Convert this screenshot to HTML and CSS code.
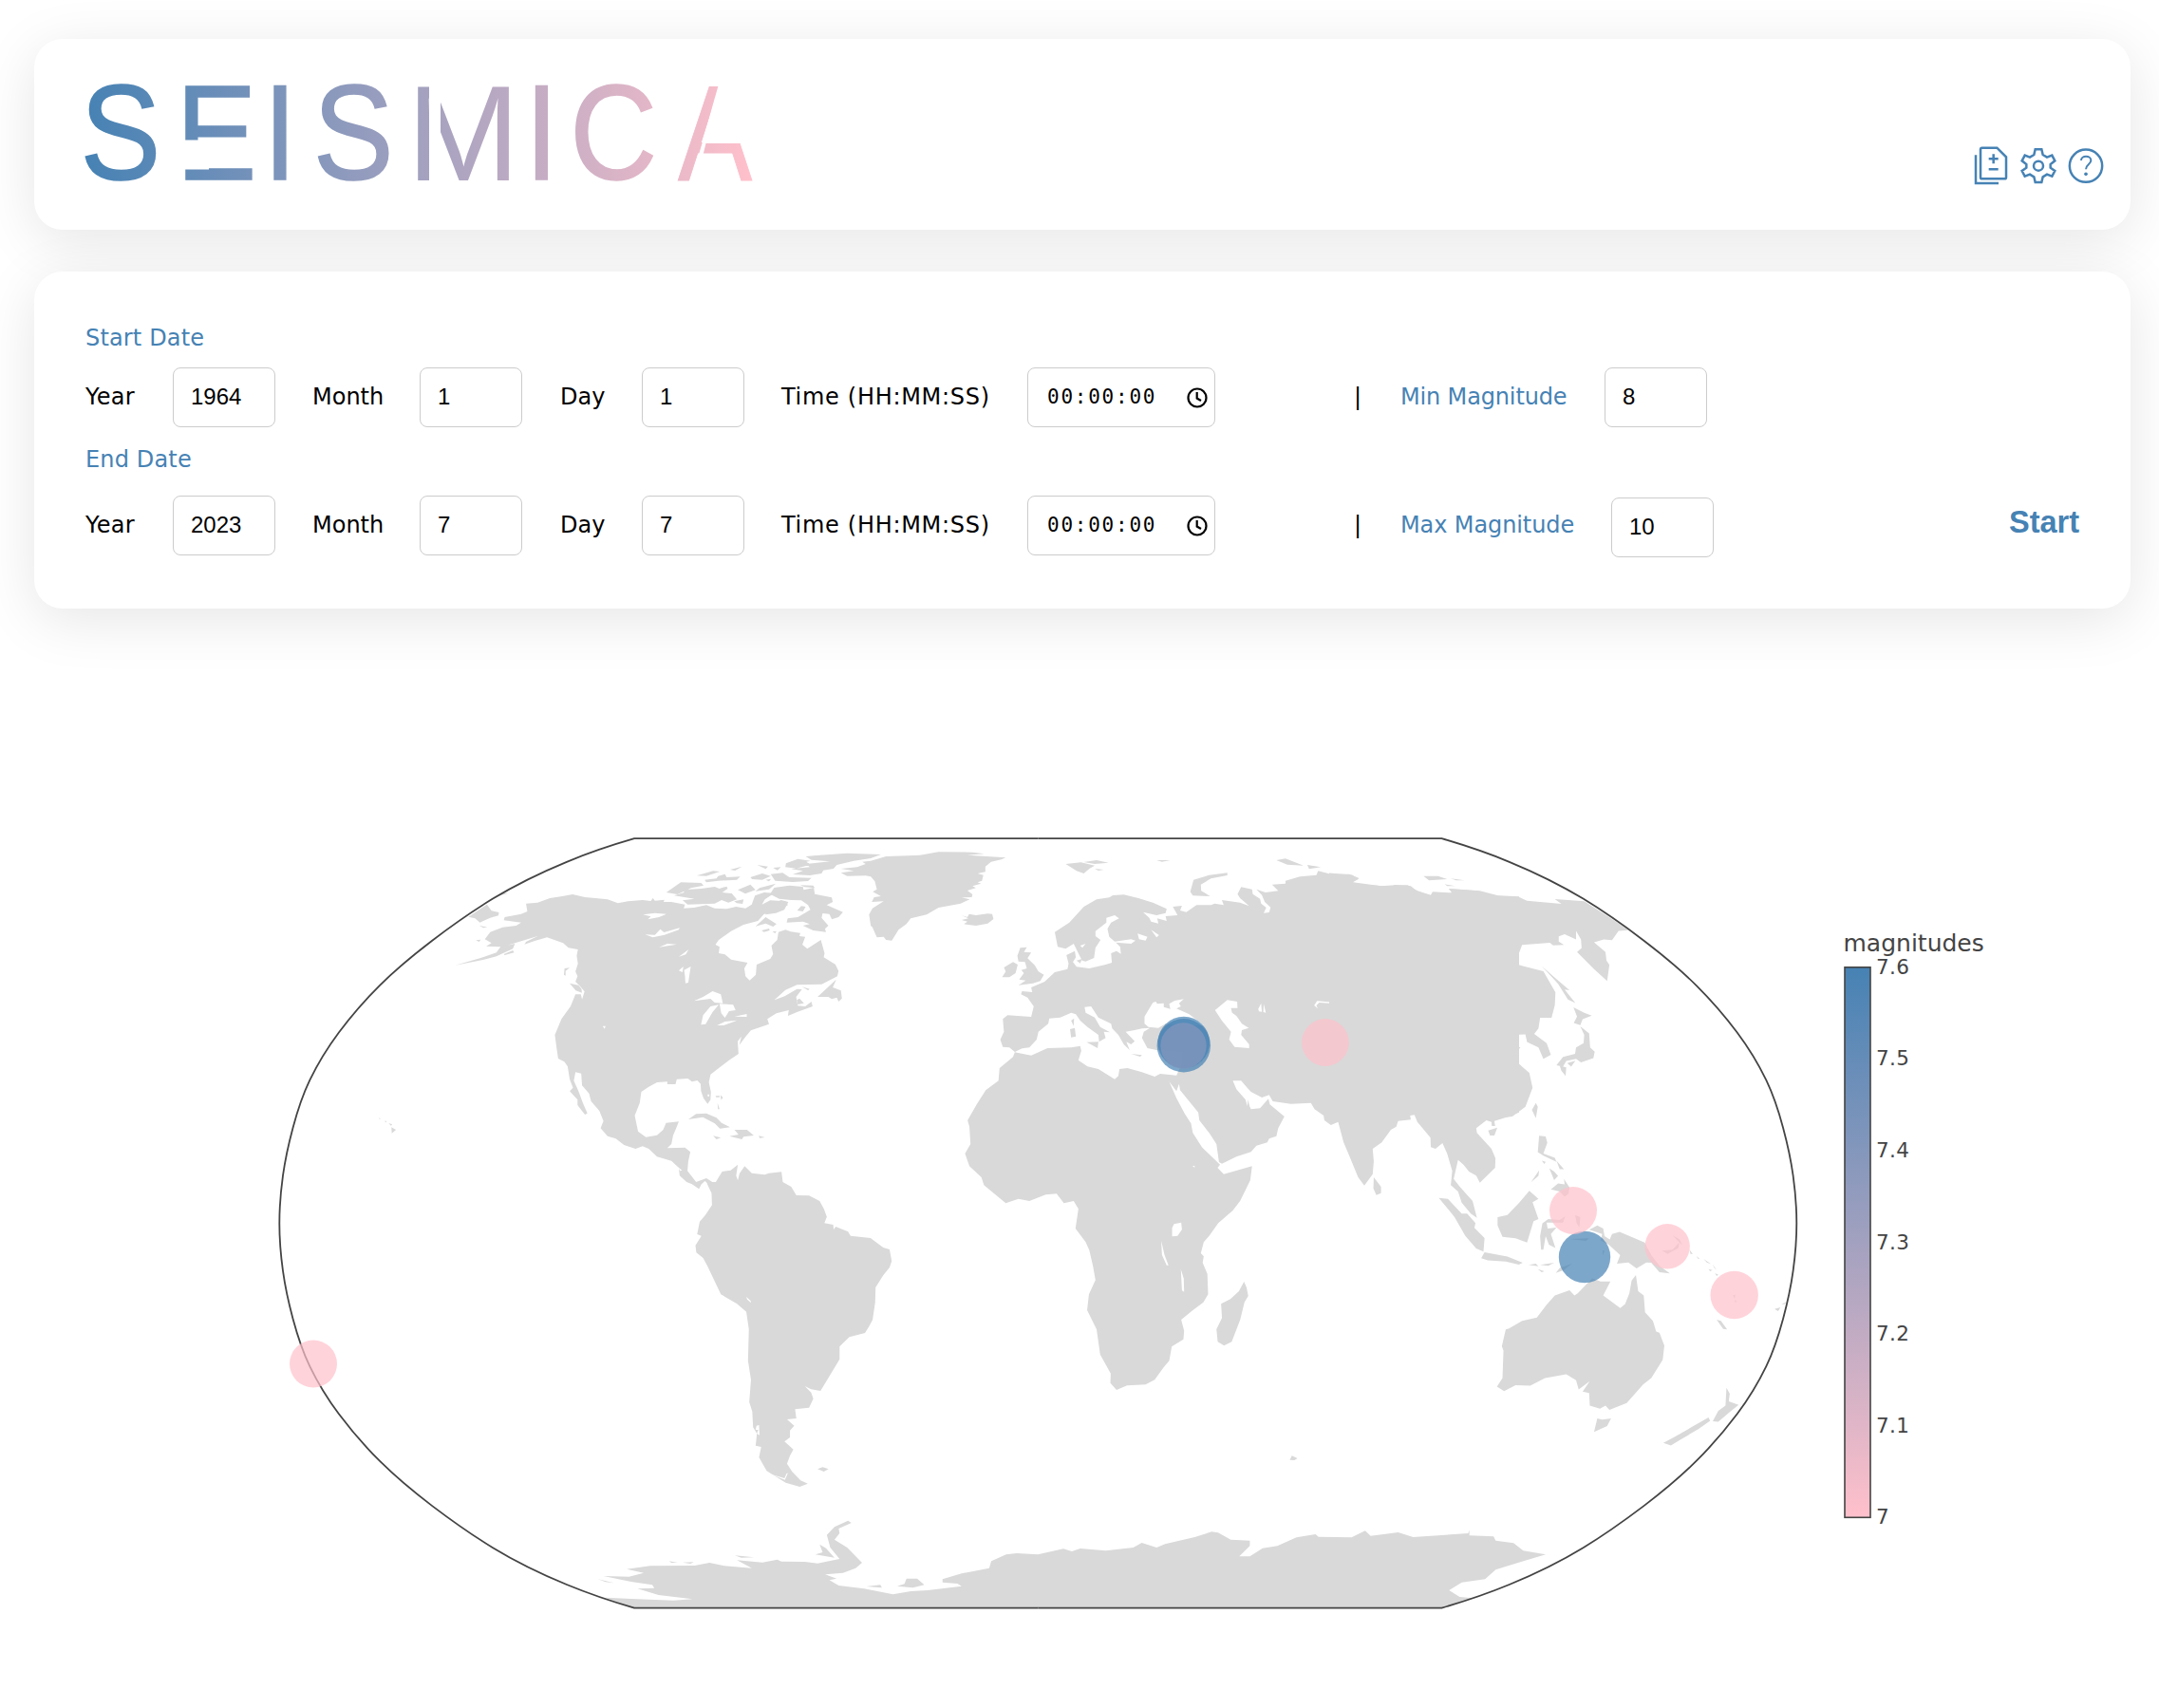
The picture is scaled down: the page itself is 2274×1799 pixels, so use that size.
FILE: index.html
```html
<!DOCTYPE html>
<html lang="en">
<head>
<meta charset="utf-8">
<title>Seismica</title>
<link rel="stylesheet" href="styles.css">
</head>
<body>
<header class="card header">
  <svg class="logo" viewBox="84 80 716 120" role="img" aria-label="Seismica">
    <defs>
      <linearGradient id="brand" gradientUnits="userSpaceOnUse" x1="101" y1="0" x2="890" y2="0">
        <stop offset="0" stop-color="#4682b4"/><stop offset="1" stop-color="#ffc0cb"/>
      </linearGradient>
      <linearGradient id="brand-m" href="#brand" x1="90" x2="792"/>
      <linearGradient id="brand-a" href="#brand" x1="-761" x2="95"/>
      <mask id="cuts" maskUnits="userSpaceOnUse" x="80" y="70" width="730" height="140">
        <rect x="80" y="70" width="730" height="140" fill="#fff"/>
        <rect x="190" y="147.500" width="30" height="31" fill="#000"/>
        <rect x="452" y="80" width="12" height="115" fill="#000"/>
        <path d="M758 85L739.500 151L727.500 191L735 191L741 161L743.500 151L800 151V85Z" fill="#000"/>
      </mask>
    </defs>
    <g class="wordmark" mask="url(#cuts)">
      <text transform="scale(.89 1)" y="189.500" x="95 208.500 311.500 370.500">SEIS</text>
      <text class="m" x="428.500" y="189.500">M</text>
      <text transform="scale(.89 1)" y="189.500" x="621 674.500">IC</text>
      <text class="a" transform="translate(714 189.500) scale(.82 1)">A</text>
    </g>
  </svg>
  <nav class="tools">
    <svg class="icon" viewBox="116 68 108 129"><path d="M142 76H189L218 105V169Q218 174 213 174H142Q137 174 137 169V81Q137 76 142 76ZM122 99V188H194M178 96V126M163 111H193M163 144H193"/></svg>
    <svg class="icon" viewBox="267 68 108 129"><path d="M311 81H331L335 98L348 106L364 100L373 117L359 128V139L373 149L364 166L348 160L335 168L331 185H311L307 168L294 160L278 166L269 149L283 139V128L269 117L278 100L294 106L307 98Z"/><circle cx="321" cy="133" r="15"/></svg>
    <svg class="icon" viewBox="416 68 108 129"><circle cx="470" cy="133" r="51.500"/><path class="fine" d="M455 116C455 99 486 99 486 116C486 128 470 128 470 144"/><circle class="dot" cx="470" cy="159" r="5.500"/></svg>
  </nav>
</header>

<main>
<form class="card form">
  <div class="heading">Start Date</div>
  <div class="row">
    <span class="label year">Year</span><span class="field">1964</span>
    <span class="label month">Month</span><span class="field">1</span>
    <span class="label day">Day</span><span class="field">1</span>
    <span class="label time">Time (HH:MM:SS)</span>
    <span class="field clock">00:00:00<svg viewBox="0 0 22 22"><circle cx="11" cy="11" r="9.500"/><path d="M10.700 5V11.500L15 14"/></svg></span>
    <span class="label bar">|</span><span class="label blue min">Min Magnitude</span><span class="field">8</span>
  </div>
  <div class="heading end">End Date</div>
  <div class="row">
    <span class="label year">Year</span><span class="field">2023</span>
    <span class="label month">Month</span><span class="field">7</span>
    <span class="label day">Day</span><span class="field">7</span>
    <span class="label time">Time (HH:MM:SS)</span>
    <span class="field clock">00:00:00<svg viewBox="0 0 22 22"><circle cx="11" cy="11" r="9.500"/><path d="M10.700 5V11.500L15 14"/></svg></span>
    <span class="label bar">|</span><span class="label blue max">Max Magnitude</span><span class="field low">10</span>
    <span class="start">Start</span>
  </div>
</form>

<svg class="map" viewBox="0 641 2274 1158">
  <defs>
    <linearGradient id="scale" x1="0" y1="0" x2="0" y2="1"><stop offset="0" stop-color="#4682b4"/><stop offset="1" stop-color="#ffc0cb"/></linearGradient>
  </defs>

  <g class="land">
    <!-- North America -->
    <g transform="translate(280 860) scale(.43367 .33333)">
      <path d="M632 275L660 272 690 258 720 252 745 246 775 255 800 258 830 262 855 274 880 268 915 264 935 267 940 258 945 266 968 263 966 270 985 270 1018 278 1015 290 1040 288 1070 280 1090 290 1120 292 1142 285 1165 290 1180 278 1188 250 1210 240 1235 242 1212 262 1205 278 1225 265 1262 268 1268 280 1235 302 1210 308 1195 330 1160 342 1130 362 1100 390 1092 405 1102 412 1100 432 1115 436 1130 452 1170 462 1162 480 1165 505 1175 518 1190 500 1192 468 1225 450 1232 435 1228 408 1242 390 1245 365 1262 358 1275 364 1298 368 1296 378 1310 380 1303 405 1315 418 1348 390 1357 432 1355 445 1383 467 1391 488 1388 505 1350 530 1290 532 1262 548 1235 580 1260 568 1290 545 1302 546 1288 570 1292 598 1310 600 1325 585 1328 600 1290 618 1268 630 1270 612 1240 622 1218 640 1222 656 1195 668 1178 676 1165 696 1150 722 1155 695 1146 710 1148 750 1125 770 1100 795 1080 815 1076 840 1081 870 1080 895 1073 908 1063 890 1057 868 1056 845 1048 834 1035 838 1025 828 998 830 995 846 975 846 975 838 950 840 930 854 912 870 908 905 896 945 904 995 923 1013 950 1007 965 990 972 968 1003 964 995 990 989 1008 985 1035 975 1048 1018 1046 1031 1060 1026 1090 1024 1120 1045 1155 1070 1143 1088 1158 1080 1165 1066 1152 1058 1162 1052 1177 1035 1162 1022 1155 1005 1135 1003 1110 985 1088 950 1075 930 1050 915 1042 898 1050 870 1038 850 1018 830 1010 813 985 820 962 810 930 790 900 785 875 768 850 766 812 752 808 748 835 760 870 770 905 781 938 775 942 757 912 757 895 738 868 746 857 738 830 733 790 725 775 710 765 706 730 702 690 718 640 740 600 752 562 765 562 768 578 774 553 762 535 752 522 757 505 752 490 758 465 755 440 758 420 735 415 722 400 683 382 655 392 628 404 632 396 660 378 605 400 575 412 535 410 548 400 532 388 545 365 575 350 608 345 620 335 578 328 580 318 620 308 635 300Z
      M460 470L520 448 560 430 570 412 605 402 600 418 560 442 530 452ZM578 435L600 423 603 430 580 438ZM492 317L537 278 548 298 566 303 565 313 545 320 520 335 508 322ZM518 344L538 350 528 352ZM510 391L522 389 518 396ZM568 250L572 241 588 243Z
      M305 982L316 990 306 1001ZM298 969L307 973 304 977ZM288 962L293 962 292 967ZM274 953L278 953 277 957ZM1092 883H1102V887H1094ZM1104 880L1110 888 1106 896ZM1097 905L1102 925 1098 925Z"/>
      <path class="water" d="M916 310L945 305 973 308 955 318 928 325 935 316ZM921 373L945 374 958 356 967 366 1005 352 1003 358 968 374 940 382ZM955 413L975 402 998 404ZM1003 443L1027 420 1020 436ZM1016 485L1032 474 1026 525 1019 527 1018 505ZM1003 487L1014 474 1012 492ZM1040 583L1062 570 1085 552 1105 562 1110 590 1090 588 1080 576ZM1057 658L1062 628 1080 600 1100 595 1085 618 1068 656ZM1102 592L1135 595 1141 612 1125 615 1115 636 1106 622ZM1096 660L1115 648 1145 644 1112 660ZM1138 632L1168 624 1168 633ZM818 662L825 662 823 671ZM1001 1108L1011 1118 1006 1120ZM1073 878H1077V884H1073Z"/>
    </g>
    <!-- Arctic islands, Greenland, Caribbean -->
    <g transform="translate(560 860) scale(.35714 .33333)">
      <path d="M912 165L960 160 985 150 975 143 1000 140 1045 126 1110 124 1145 122 1200 112 1300 113 1335 118 1285 122 1398 130 1385 136 1355 143 1338 158 1338 175 1315 180 1332 185 1328 203 1315 208 1325 212 1300 220 1310 226 1285 234 1300 246 1298 255 1268 256 1292 262 1265 275 1200 288 1165 310 1118 322 1105 340 1082 358 1062 392 1045 390 1038 380 1018 382 1005 350 1000 345 995 310 1005 290 1038 268 1003 270 1010 255 1030 252 1006 238 1018 230 1012 205 1000 190 985 187 930 188 912 178 950 172Z
      M1268 312L1285 318 1290 308 1310 312 1345 307 1358 308 1362 324 1345 338 1310 345 1275 340 1285 332 1268 327 1288 322Z
      M808 126L850 122 930 116 1030 120 1000 132 950 140 900 153 890 165 860 170 855 180 820 186 770 183 800 172 765 166 820 160 810 150 880 142 825 137ZM750 148L785 134 822 140 810 143 822 152 780 164 748 160ZM705 182L740 178 760 192 825 194 815 204 770 207 718 203ZM645 192L680 180 705 188 680 200 650 198ZM487 187L535 172 555 174 515 188ZM510 200L545 196 550 188 570 182 575 192 615 190 605 200 550 203 515 208ZM585 168L620 158 600 171ZM665 153L697 158 690 166ZM712 162L735 160 725 170ZM690 200L706 197 700 205Z
      M397 240L440 208 500 210 507 218 470 226 430 246ZM420 250L450 240 445 232 500 228 540 222 553 228 575 221 578 228 562 240 590 243 605 262 580 272 560 264 540 275 460 278 445 265 480 260ZM608 232L645 215 660 232 630 244ZM660 236L672 226 720 212 700 230ZM597 268L625 262 622 276 605 274ZM792 217L830 218 835 226 805 223Z
      M703 245L715 225 760 218 800 222 802 232 832 225 835 245 885 256 888 270 870 280 918 302 905 318 885 325 878 308 858 306 855 320 875 345 865 355 868 365 830 360 800 345 820 340 800 332 752 335 755 322 785 318 822 295 815 280 795 265 765 264 730 260ZM783 297L795 283 808 285 800 300ZM690 310L688 290 735 264 757 270 745 295 720 305ZM660 347L690 318 722 340 712 348 690 338ZM678 360L700 354 702 360 685 365ZM710 364L722 362 718 369ZM843 570L898 515 888 540 912 550 915 575 905 585 900 572 885 577 875 570ZM797 538L820 545 815 549ZM782 580L790 575 803 590 785 594ZM112 527L138 533 147 545 148 557 130 550ZM97 480L112 478 100 488 100 503 95 500Z
      M462 957L485 940 515 938 545 952 560 968 585 982 555 986 540 970 505 950ZM583 1010L610 1005 598 990 635 990 655 1008 625 1012 620 1020ZM535 1009L558 1015 545 1020ZM670 1009L688 1014 672 1016Z"/>
    </g>
    <!-- Eurasia and Africa -->
    <g transform="translate(1000 860) scale(.38265 .33333)">
      <path d="M147 728L140 705 150 680 147 640 160 628 225 633 232 600 215 572 197 562 200 552 228 555 225 540 262 522 290 492 325 482 328 465 322 438 345 425 348 445 340 460 350 475 385 480 430 468 447 462 445 432 460 425 472 434 470 412 458 398 500 402 512 392 500 388 455 395 440 380 435 355 445 335 467 322 455 312 432 320 432 335 402 362 402 378 416 390 402 415 398 447 375 458 365 455 342 402 320 418 298 412 290 365 330 335 370 285 405 262 440 256 450 249 480 247 520 258 560 272 598 292 595 305 570 312 533 302 550 320 555 332 575 338 572 322 598 330 595 315 628 312 615 285 640 282 635 297 652 302 680 280 720 280 730 275 755 280 750 264 800 272 825 283 800 258 793 245 803 223 833 230 835 245 855 260 858 275 872 288 865 305 880 303 884 287 868 270 860 248 845 230 870 240 905 235 888 215 925 212 925 203 965 190 1010 185 1015 172 1050 182 1100 182 1128 195 1108 208 1140 215 1220 222 1225 216 1270 220 1285 235 1325 248 1330 238 1390 242 1375 228 1460 235 1510 250 1568 253V935L1540 948 1500 962 1502 978 1493 978 1492 965 1478 960 1450 985 1452 1000 1492 1050 1503 1080 1502 1110 1460 1157 1450 1135 1430 1122 1415 1100 1400 1085 1395 1110 1388 1145 1405 1170 1440 1215 1452 1268 1435 1255 1410 1220 1400 1185 1380 1165 1384 1120 1370 1065 1357 1032 1338 1050 1325 1045 1324 1015 1288 965 1280 943 1268 945 1270 958 1235 962 1230 980 1215 990 1190 1030 1165 1050 1168 1090 1165 1130 1142 1166 1125 1140 1100 1070 1085 1030 1070 965 1050 975 1032 960 1030 945 1005 925 995 905 940 908 890 900 880 880 860 888 830 870 818 855 803 835 780 835 790 862 815 895 820 915 822 895 826 915 830 925 855 922 878 892 882 910 922 948 905 985 900 1010 880 1018 875 1030 845 1040 830 1060 790 1075 750 1097 742 1092 735 1035 715 1000 688 960 685 935 635 865 632 845 625 868 605 838 625 890 648 940 665 970 670 1000 695 1045 745 1100 738 1110 755 1130 833 1105 828 1150 800 1215 780 1245 740 1285 715 1325 700 1345 692 1380 700 1390 697 1410 710 1445 712 1510 699 1535 670 1560 638 1590 646 1625 644 1652 612 1675 605 1720 590 1740 565 1780 540 1795 489 1798 460 1812 443 1790 444 1760 415 1700 405 1620 379 1560 384 1510 402 1465 395 1420 385 1370 375 1345 347 1302 355 1240 342 1215 315 1222 295 1192 265 1195 220 1215 190 1208 155 1222 95 1165 88 1140 55 1105 43 1065 58 1035 55 980 50 960 75 910 100 865 135 835 138 795 175 760 180 745 225 755 270 732 335 730 360 725 363 740 355 770 380 790 410 798 455 830 465 820 468 798 490 795 530 808 565 822 580 813 625 818 640 780V745L570 738 545 732 530 700 535 680 552 668 530 670 510 675 485 680 510 710 500 720 487 712 496 738 480 720 465 690 448 670 445 655 410 635 390 600 372 602 375 620 400 635 415 665 442 682 425 680 430 700 412 712 410 690 380 665 360 645 348 625 335 620 305 635 275 638 272 655 245 680 240 705 220 730 200 733 180 744 165 730Z
      M187 440L195 415 213 413 205 428 225 430 215 448 235 470 245 490 260 500 250 520 230 527 190 533 210 518 192 515 205 495 198 485 213 480 208 460 190 458ZM145 508L155 490 150 477 175 460 188 468 182 495 165 508ZM320 150L362 145 400 155 385 165 370 180 350 172ZM370 144L405 138 438 146 400 150ZM400 165L425 168 410 171ZM570 138L608 138 585 143ZM663 238L672 200 715 185 765 178 765 186 720 196 692 215 693 235 718 252 670 250ZM900 138L925 133 975 155 930 152ZM985 153L1022 160 990 166ZM1305 188L1345 188 1370 198 1320 202ZM1380 196L1418 202 1395 202ZM1363 214L1392 220 1370 220ZM332 672L345 668 348 695 335 698ZM335 645L343 638 342 662ZM378 713L410 712 408 732ZM500 750L530 754 525 759ZM350 455L365 450 360 464ZM1168 1140L1188 1170 1188 1190 1175 1196 1167 1175ZM1483 992L1508 983 1500 1008 1488 1008ZM1347 1205L1372 1208 1410 1255 1425 1255 1448 1285 1445 1300 1473 1332 1470 1375 1450 1365 1420 1325 1390 1265Z"/>
      <path class="water" d="M537 655L537 632 560 588 568 585 572 592 590 590 590 602 608 608 605 592 620 582 645 577 632 590 637 600 625 607 660 625 700 660 620 660 595 655 575 668 548 665ZM731 612L765 580 792 585 793 605 775 605 778 620 790 630 805 655 824 668 805 675 803 690 825 720 825 732 785 728 770 705 775 680 750 645ZM850 608L858 590 860 617 852 616ZM865 592L871 620 864 618ZM1014 607L1004 597 1012 583 1057 587 1055 591 1018 588 1010 597ZM1298 453L1313 482 1302 508 1275 514 1295 498 1303 480ZM518 370L545 380 540 392 522 388ZM555 358L577 375 570 382ZM360 408L375 402 366 415ZM613 1327L613 1300 618 1288 638 1283 640 1305 628 1325ZM583 1340L592 1385 603 1418 598 1418 585 1385ZM637 1430L645 1460 646 1502 640 1498ZM669 1105L675 1103 675 1109Z"/>
    </g>
    <!-- East Asia and Oceania -->
    <g transform="translate(1400 860) scale(.34439 .44643)">
      <path d="M0 133L70 138 90 147 72 155 160 164 200 162 240 162 270 175 310 186 375 180 365 170 450 175 510 187 580 190 605 199 710 206 690 195 780 200 862 240 915 268 885 270 865 292 840 290 810 297 845 320 848 340 857 350 850 388 810 360 758 320 772 310 770 290 755 270 755 290 720 278 702 283 702 295 718 303 685 304 675 298 590 303 568 348 615 357 655 365 692 415 690 445 680 475 645 475 640 500 627 513 665 535 678 562 655 572 640 545 605 532 600 514 560 515 548 503 515 523 540 535 585 545 558 567 590 590 612 605 622 640 600 685 560 708 480 715 400 700 0 690Z
      M650 353L690 380 735 410 720 408 753 440 730 432 700 395ZM747 450L780 463 803 470 775 478 768 492 748 487 758 472ZM768 495L795 512 798 545 812 555 808 570 770 580 755 572 725 577 715 590 695 587 715 567 752 560 755 545 778 535 780 515ZM705 588L725 592 723 612 710 600ZM728 582L753 576 740 590ZM620 692L632 676 638 685 632 712ZM642 753L662 755 667 770 655 795 690 805 695 815 655 800 638 792ZM695 812L718 832 705 832ZM650 812L662 815 658 820ZM673 830L688 838 700 848 688 858ZM617 863L642 835 640 848ZM678 880L700 866 720 868 718 855 735 875 732 890 720 897 705 885ZM515 945L545 940 580 912 612 883 640 902 622 910 640 950 625 955 605 1005 570 995 530 992 515 965ZM648 1022L645 990 652 960 670 950 705 952 722 943 715 958 665 958 668 972 695 970 678 985 692 1018 672 1010 662 990 655 1022ZM752 940L768 945 765 970 757 960ZM735 997L795 995 785 1001ZM465 1042L475 1028 545 1038 592 1053 580 1057 540 1050 485 1047ZM610 1058L632 1055 640 1061ZM645 1058L688 1053 670 1060ZM638 1068L658 1073 650 1075ZM693 1077L705 1065 742 1055 718 1070ZM835 1025L842 1023 838 1036ZM795 975L820 965 838 972 842 990 858 998 865 985 888 980 965 1005 985 1035 1010 1060 1042 1078 1010 1075 985 1053 970 1052 940 1066 915 1052 880 1055 890 1035 855 1010 830 1000 835 985ZM1018 1024L1050 1022 1070 1005 1068 1018 1035 1032ZM1050 988L1072 998 1080 1012 1065 1000ZM1102 1022L1112 1032 1105 1032ZM1123 1037L1133 1043 1128 1043ZM1145 1044L1168 1056 1155 1052ZM1172 1056L1185 1070 1178 1065ZM1160 1068L1172 1070 1165 1073ZM1180 1078L1190 1081 1185 1084ZM1185 1187L1198 1190 1217 1210 1205 1209ZM1235 1130L1242 1128 1240 1138ZM1240 1140L1247 1144 1242 1147ZM1362 1162L1380 1158 1373 1167ZM1383 1150L1400 1145 1392 1151Z
      M513 1345L530 1325 533 1260 528 1250 540 1210 550 1208 590 1190 635 1182 665 1152 690 1130 735 1118 750 1130 760 1125 785 1105 805 1090 830 1097 860 1097 838 1130 890 1160 905 1150 918 1125 925 1095 938 1082 945 1120 962 1130 966 1170 990 1190 1000 1215 1010 1218 1025 1248 1020 1282 985 1325 960 1340 910 1384 857 1400 845 1390 828 1397 797 1390 795 1360 775 1357 797 1332 763 1352 755 1330 725 1316 660 1325 615 1343 570 1342 535 1356ZM810 1452L820 1420 835 1423 862 1420 850 1438ZM1215 1348L1225 1362 1222 1380 1252 1388 1225 1405 1190 1428 1173 1427 1190 1402 1212 1390ZM1022 1478L1060 1462 1110 1440 1160 1418 1165 1426 1130 1445 1070 1472 1045 1484Z"/>
    </g>
    <g transform="translate(1200 1200) scale(.44643 .33333)">
      <path d="M247 450L253 468 257 495 248 515 238 570 218 640 200 652 185 640 182 600 195 565 193 520 215 505 235 480ZM355 1013L360 1000 373 1008 366 1014Z"/>
    </g>
    <!-- South America and Antarctica -->
    <g transform="translate(620 1200) scale(.44643 .33333)">
      <path d="M278 135L300 135 315 102 335 98 352 80 348 115 352 130 356 108 368 85 385 107 415 112 425 107 455 103 458 135 478 150 490 177 520 178 545 195 555 220 562 245 556 265 577 270 578 285 583 276 612 292 618 305 665 312 695 342 710 348 715 385 710 405 695 430 677 468 676 515 670 570 662 590 652 612 615 625 592 655 592 695 565 755 547 795 525 790 510 780 525 800 530 820 520 848 487 853 490 882 468 885 485 905 475 920 475 942 462 955 483 980 475 1000 468 1025 480 1050 500 1078 517 1088 498 1098 465 1085 420 1048 402 1005 407 972 394 968 397 930 388 910 386 860 379 830 383 760 376 700 378 600 372 545 350 520 312 490 280 400 270 375 254 358 252 335 266 305 256 300 262 260 275 240 291 208 290 170 282 148ZM540 1042L552 1036 566 1042 555 1050Z
      M105 1482L40 1448 100 1452 200 1457 245 1453 165 1440 115 1420 155 1418 150 1408 100 1398 35 1380 95 1382 130 1370 90 1358 145 1348 250 1347 285 1338 320 1348 385 1355 350 1330 410 1337 445 1328 455 1334 510 1335 540 1340 592 1326 570 1290 562 1250 580 1225 612 1205 620 1212 590 1230 592 1245 580 1265 610 1290 645 1338 630 1355 600 1370 558 1375 585 1388 568 1393 590 1410 650 1420 718 1438 760 1428 800 1425 880 1412 870 1404 835 1400 835 1390 880 1372 945 1355 950 1333 985 1312 1010 1308 1060 1312 1120 1294 1140 1302 1160 1293 1220 1300 1285 1290 1305 1275 1340 1290 1360 1279 1430 1257 1470 1240 1485 1243 1515 1265 1560 1268 1560 1285 1535 1318 1560 1318 1590 1292 1625 1285 1670 1258 1715 1248 1722 1256 1800 1258 1832 1237 1845 1253 1910 1242 1945 1257 2075 1245 2078 1235 2078 1252 2135 1255 2140 1268 2182 1276 2205 1300 2258 1312 2200 1335 2140 1360 2115 1390 2060 1400 2030 1425 2055 1446 2085 1450 2016 1482Z
      M545 1280L560 1292 580 1322 535 1312 552 1305ZM728 1412L745 1405 750 1388 775 1388 792 1408 765 1417ZM655 1413L688 1408 692 1417ZM22 1390L60 1402 40 1399ZM190 1333L210 1338H195ZM222 1337L248 1336 240 1341ZM345 1315L390 1321 360 1322Z"/>
      <path class="water" d="M372 498L382 510 383 517 374 506ZM396 905L402 903 403 935 397 930 400 918H394ZM430 1058L463 1076 470 1055 480 1052 467 1056 462 1071Z"/>
    </g>
  </g>

  <g class="frame" transform="translate(1093.300 1288.400)">
    <path id="edge" d="M0 -405.200H425.200C446 -399.200 469.500 -391.700 496.400 -380.600S551.200 -355.800 574.200 -341.800S618 -313 638.100 -297.700S677.200 -266.500 693.500 -250.300S724 -217.500 736.400 -200.900S758.900 -167.500 767 -150.700S780.300 -117.200 784.800 -100.500S793 -67 795.300 -50.200S799 -16.700 799 0S797.600 33.400 795.300 50.200S789.300 83.800 784.800 100.500S775.100 133.900 767 150.700S748.800 184.300 736.400 200.900S709.800 234.100 693.500 250.300S658.300 282.400 638.100 297.700S597.200 327.800 574.200 341.800S523.300 369.500 496.400 380.600S446 399.200 425.200 405.200H0"/>
    <use href="#edge" transform="scale(-1 1)"/>
  </g>

  <g class="quakes">
    <circle class="strong" cx="1246.800" cy="1101.300" r="28.200"/>
    <circle class="strong" cx="1246.800" cy="1098" r="27.200"/>
    <circle class="medium" cx="1246.500" cy="1101.500" r="24.200"/>
    <circle class="strong" cx="1669" cy="1324" r="27.200"/>
    <circle cx="1395.900" cy="1098" r="24.900"/>
    <circle cx="1657" cy="1275" r="25"/>
    <circle cx="1756.200" cy="1312.800" r="23.700"/>
    <circle cx="1826.700" cy="1364" r="25.200"/>
    <circle cx="330" cy="1436.500" r="25"/>
  </g>

  <rect class="colorbar" x="1943" y="1018.800" width="27" height="579.500"/>
  <text class="legend-title" x="1941.500" y="1002">magnitudes</text>
  <g class="ticks">
    <text x="1976" y="1026">7.6</text><text x="1976" y="1122.300">7.5</text><text x="1976" y="1219">7.4</text><text x="1976" y="1315.500">7.3</text><text x="1976" y="1412">7.2</text><text x="1976" y="1508.800">7.1</text><text x="1976" y="1605">7</text>
  </g>
</svg>
</main>
</body>
</html>
```
FILE: styles.css
```css
* { box-sizing: border-box; }
body {
  margin: 0;
  padding-top: 41px;
  background: #fff;
  color: #000;
  font-family: "DejaVu Sans", sans-serif;
  font-size: 24px;
  overflow: hidden;
}
.card {
  margin: 0 30px 0 36px;
  border-radius: 30px;
  background: #fff;
  box-shadow: 0 12px 60px rgba(0, 0, 0, .1);
}
.header {
  display: flex;
  justify-content: space-between;
  align-items: flex-end;
  height: 201px;
  padding: 0 29px 42px 48px;
}
.logo { width: 716px; height: 120px; overflow: visible; }
.wordmark {
  font-family: "Liberation Sans", sans-serif;
  font-size: 143px;
}
.wordmark text { fill: url(#brand); stroke: url(#brand); stroke-width: 1.500; }
.wordmark .m { fill: url(#brand-m); stroke: none; }
.wordmark .a { fill: url(#brand-a); stroke: url(#brand-a); stroke-width: 1; }
.tools { display: flex; gap: 14px; padding-bottom: 4px; }
.icon {
  width: 36px;
  height: 43px;
  fill: none;
  stroke: #4682b4;
  stroke-width: 7.500;
  overflow: visible;
}
.icon .fine { stroke-width: 6; }
.icon .dot { fill: #4682b4; stroke: none; }

.form { height: 355px; margin-top: 44px; padding: 56px 54px 0; }
.heading {
  height: 28px;
  line-height: 28px;
  margin-bottom: 17px;
  color: #4682b4;
  letter-spacing: .15px;
}
.heading.end { margin: 20px 0 24px; }
.row { display: flex; gap: 40px; height: 63px; align-items: flex-start; }
.label { line-height: 62px; white-space: nowrap; }
.year { width: 52px; letter-spacing: .3px; }
.month { width: 73px; margin-left: -1px; }
.day { width: 46px; }
.time { width: 219px; margin-left: -1px; letter-spacing: .7px; }
.bar { width: 9px; margin-left: 106px; }
.min { width: 175px; letter-spacing: -.15px; }
.max { width: 182px; letter-spacing: -.1px; }
.blue { color: #4682b4; }
.field {
  width: 108px;
  height: 63px;
  padding-left: 18px;
  border: 1px solid #ccc;
  border-radius: 8px;
  font: 24px/60px "Liberation Sans", sans-serif;
}
.clock {
  display: flex;
  justify-content: space-between;
  align-items: center;
  width: 198px;
  padding: 0 7px 0 20px;
  font: 21px/63px "DejaVu Sans Mono", monospace;
  letter-spacing: 1.760px;
}
.clock svg { width: 22px; height: 22px; fill: none; stroke: #000; stroke-width: 2.200; }
.low { margin-top: 2px; }
.start {
  margin-left: auto;
  color: #4682b4;
  font: bold 32.500px/56px "Liberation Sans", sans-serif;
}

.map { display: block; width: 2274px; height: 1158px; }
.land { fill: #d9d9d9; }
.water { fill: #fff; }
.frame { fill: none; stroke: #444; stroke-width: 1.800; }
.quakes { fill: #ffc0cb; fill-opacity: .7; }
.strong { fill: #4682b4; }
.medium { fill: #8897be; }
.colorbar { fill: url(#scale); stroke: #444; stroke-width: 1.600; }
.legend-title { font-size: 25px; fill: #444; }
.ticks { font-size: 21.500px; fill: #444; letter-spacing: .4px; }
```
